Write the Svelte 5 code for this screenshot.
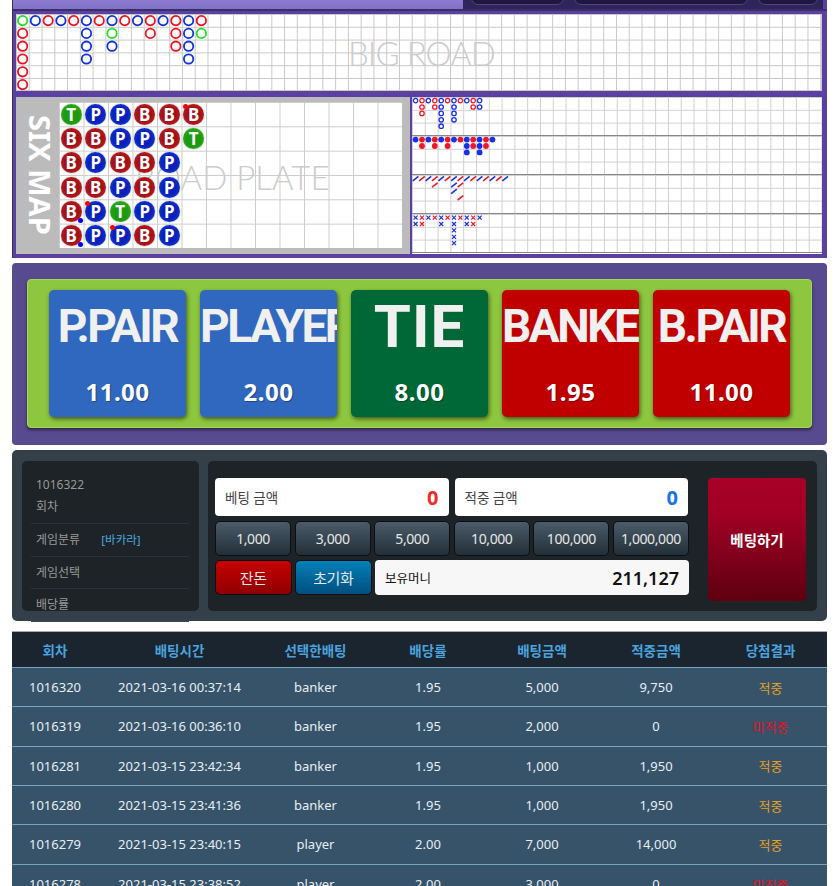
<script>
  // 빅로드: 컬럼별 결과 (R 뱅커, B 플레이어, G 타이)
  const bigRoad = ['GRRRRR', 'B', 'R', 'B', 'R', 'BBBB', 'R', 'BGB', 'R', 'B', 'RR', 'B', 'RRR', 'BBBB', 'RG'];
  const bigColor = { R: '#f01020', B: '#1030e0', G: '#20e020' };

  const plate = [
    ['T', 'P', 'P', 'B', 'B', 'B'],
    ['B', 'B', 'P', 'P', 'B', 'T'],
    ['B', 'P', 'B', 'B', 'P'],
    ['B', 'B', 'P', 'B', 'P'],
    ['B', 'P', 'T', 'P', 'P'],
    ['B', 'P', 'P', 'B', 'P']
  ];
  const redDots = ['0-5', '4-1', '5-2'];
  const blueDots = ['4-0', '5-0'];

  const derived = [
    { kind: 'ring', cols: ['B', 'RRR', 'B', 'RR', 'BBBBB', 'R', 'BBBB', 'R', 'B', 'RR', 'BB'] },
    { kind: 'dot', cols: ['B', 'RR', 'B', 'RR', 'B', 'RR', 'B', 'R', 'BBB', 'RR', 'BBB', 'RR', 'B'] },
    { kind: 'slash', cols: ['B', 'R', 'B', 'RR', 'B', 'R', 'BBB', 'RR-R', 'B', 'R', 'B', 'R', 'B', 'R', 'B'] },
    { kind: 'cross', cols: ['BB', 'RR', 'B', 'R', 'BB', 'R', 'BBBBB', 'R', 'BB', 'RR', 'B'] }
  ];
  const smallColor = { R: '#f01828', B: '#1830e8' };

  const chips = ['1,000', '3,000', '5,000', '10,000', '100,000', '1,000,000'];
  const cards = [
    { name: 'P.PAIR', odds: '11.00', cls: 'blue' },
    { name: 'PLAYER', odds: '2.00', cls: 'blue' },
    { name: 'TIE', odds: '8.00', cls: 'green' },
    { name: 'BANKER', odds: '1.95', cls: 'red' },
    { name: 'B.PAIR', odds: '11.00', cls: 'red' }
  ];
  const heads = ['회차', '배팅시간', '선택한배팅', '배당률', '배팅금액', '적중금액', '당첨결과'];
  const rows = [
    ['1016320', '2021-03-16 00:37:14', 'banker', '1.95', '5,000', '9,750', '적중'],
    ['1016319', '2021-03-16 00:36:10', 'banker', '1.95', '2,000', '0', '미적중'],
    ['1016281', '2021-03-15 23:42:34', 'banker', '1.95', '1,000', '1,950', '적중'],
    ['1016280', '2021-03-15 23:41:36', 'banker', '1.95', '1,000', '1,950', '적중'],
    ['1016279', '2021-03-15 23:40:15', 'player', '2.00', '7,000', '14,000', '적중'],
    ['1016278', '2021-03-15 23:38:52', 'player', '2.00', '3,000', '0', '미적중']
  ];
</script>

<div class="page">
  <section class="roads">
    <div class="topbar">
      <div class="topbar-left"></div>
      <div class="topbar-right">
        <span class="pill" style="width:93px"></span>
        <span class="pill" style="width:174px"></span>
        <span class="pill" style="width:60px"></span>
      </div>
    </div>

    <div class="bigroad">
      <span class="mark mark-big">BIG ROAD</span>
      <svg width="805" height="77" class="layer">
        {#each bigRoad as col, c}
          {#each col.split('') as v, r}
            <circle cx={6.6 + c * 12.77} cy={6.6 + r * 12.8} r="4.7" fill="none" stroke={bigColor[v]} stroke-width="1.8" />
          {/each}
        {/each}
      </svg>
    </div>

    <div class="lower">
      <div class="sixmap">
        <div class="sixmap-title">SIX MAP</div>
        <div class="plate">
          <span class="mark mark-plate">ROAD PLATE</span>
          {#each plate as line, r}
            <div class="plate-row">
              {#each line as v, c}
                <div class="ball ball-{v}">
                  {v}
                  {#if redDots.includes(`${r}-${c}`)}<i class="pair pair-red"></i>{/if}
                  {#if blueDots.includes(`${r}-${c}`)}<i class="pair pair-blue"></i>{/if}
                </div>
              {/each}
            </div>
          {/each}
        </div>
      </div>

      <div class="boards">
        {#each derived as board}
          <div class="board">
            <svg width="410" height="38" class="layer">
              {#each board.cols as col, c}
                {#each col.split('') as v, r}
                  {#if v !== '-'}
                    {@const x = 3.6 + c * 6.4}
                    {@const y = 3.6 + r * 6.4}
                    {#if board.kind === 'ring'}
                      <circle cx={x} cy={y} r="2.2" fill="none" stroke={smallColor[v]} stroke-width="1.3" />
                    {:else if board.kind === 'dot'}
                      <circle cx={x} cy={y} r="2.9" fill={smallColor[v]} />
                    {:else if board.kind === 'slash'}
                      <line x1={x - 2.8} y1={y + 2.2} x2={x + 2.8} y2={y - 2.2} stroke={smallColor[v]} stroke-width="1.6" />
                    {:else}
                      <path d="M{x - 2} {y - 2}L{x + 2} {y + 2}M{x + 2} {y - 2}L{x - 2} {y + 2}" stroke={smallColor[v]} stroke-width="1.2" fill="none" />
                    {/if}
                  {/if}
                {/each}
              {/each}
            </svg>
          </div>
        {/each}
      </div>
    </div>
  </section>

  <section class="bet">
    <div class="bet-inner">
      {#each cards as card}
        <div class="card {card.cls}">
          <div class="card-name" class:tie={card.name === 'TIE'}>{card.name}</div>
          <div class="card-odds">{card.odds}</div>
        </div>
      {/each}
    </div>
  </section>

  <section class="control">
    <div class="info">
      <div class="info-row first">
        <div>1016322</div>
        <div class="round-label">회차</div>
      </div>
      <div class="info-row">게임분류 <span class="tag">[바카라]</span></div>
      <div class="info-row">게임선택</div>
      <div class="info-row">배당률</div>
    </div>

    <div class="slip">
      <div class="slip-main">
        <div class="amounts">
          <div class="amount">
            <span>베팅 금액</span><b class="val-red">0</b>
          </div>
          <div class="amount">
            <span>적중 금액</span><b class="val-blue">0</b>
          </div>
        </div>
        <div class="chips">
          {#each chips as chip}
            <button class="chip">{chip}</button>
          {/each}
        </div>
        <div class="actions">
          <button class="chip act-red">잔돈</button>
          <button class="chip act-blue">초기화</button>
          <div class="balance">
            <span>보유머니</span><b>211,127</b>
          </div>
        </div>
      </div>
      <button class="submit">베팅하기</button>
    </div>
  </section>

  <table class="history">
    <colgroup>
      <col style="width:86px" /><col style="width:163px" /><col style="width:109px" />
      <col style="width:116px" /><col style="width:112px" /><col style="width:116px" /><col />
    </colgroup>
    <thead>
      <tr>
        {#each heads as head}<th>{head}</th>{/each}
      </tr>
    </thead>
    <tbody>
      {#each rows as row}
        <tr>
          {#each row as cell, i}
            <td class:hit={i === 6 && cell === '적중'} class:miss={i === 6 && cell === '미적중'}>{cell}</td>
          {/each}
        </tr>
      {/each}
    </tbody>
  </table>
</div>

<style>
  :global(html), :global(body) {
    margin: 0;
    overflow: hidden;
    background: #fff;
  }

  .page {
    width: 815px;
    margin-left: 12px;
    font-family: "Noto Sans", "Noto Sans CJK KR", sans-serif;
  }

  .layer { position: absolute; left: 0; top: 0; }

  /* 상단 로드맵 */
  .roads {
    height: 258px;
    box-sizing: border-box;
    background: #5b3fa3;
    border-left: 1px solid #3a3068;
    padding: 0 5px 0 3px;
    overflow: hidden;
  }
  .topbar {
    display: flex;
    height: 9px;
    margin: 0 -5px 0 -3px;
    border-bottom: 2px solid #3b2f68;
  }
  .topbar-left {
    width: 450px;
    background: linear-gradient(#8d7bd2, #8072c6);
  }
  .topbar-right {
    flex: 1;
    display: flex;
    gap: 10px;
    padding-left: 8px;
    background: #2f2558;
    align-items: flex-end;
    height: 9px;
    border-right: 4px solid #5b3fa3;
  }
  .pill {
    display: block;
    height: 14px;
    margin-bottom: 4px;
    box-sizing: border-box;
    background: #20163f;
    border: 1px solid #4d4488;
    border-radius: 7px;
  }
  .bigroad {
    position: relative;
    height: 77px;
    margin-top: 3px;
    background-color: #fff;
    background-image:
      linear-gradient(90deg, #c9c9c9 1px, transparent 1px),
      linear-gradient(#c9c9c9 1px, transparent 1px);
    background-size: 12.77px 12.8px;
    box-shadow: inset -1px -1px 0 #c9c9c9;
  }
  .mark {
    position: absolute;
    font-family: Lato, sans-serif;
    font-weight: 300;
    color: #ccc;
    white-space: nowrap;
    line-height: 1;
  }
  .mark-big { left: 332px; top: 23px; font-size: 33px; letter-spacing: -1px; }
  .mark-plate { left: 76px; top: 59px; font-size: 33px; }

  .lower {
    display: flex;
    height: 157px;
    margin-top: 6px;
    gap: 2px;
  }
  .sixmap {
    width: 394px;
    background: #bbb;
    display: flex;
    box-sizing: border-box;
    padding: 5px 8px 6px 0;
  }
  .sixmap-title {
    width: 43px;
    writing-mode: vertical-rl;
    text-align: center;
    line-height: 37px;
    color: #fff;
    font: 700 29px/37px "Noto Sans", sans-serif;
    letter-spacing: 0;
  }
  .plate {
    position: relative;
    width: 343px;
    height: 146px;
    background-color: #fff;
    background-image:
      linear-gradient(90deg, #ccc 1px, transparent 1px),
      linear-gradient(#ccc 1px, transparent 1px);
    background-size: 24.5px 24.33px;
  }
  .plate-row {
    position: relative;
    display: flex;
    height: 24.33px;
    align-items: center;
  }
  .ball {
    position: relative;
    flex: 0 0 21px;
    height: 21px;
    margin: 0 1.75px;
    border-radius: 50%;
    color: #fff;
    font: 700 17px/21px "Noto Sans", sans-serif;
    text-align: center;
    box-shadow: 0 0 1.5px rgba(80, 80, 80, 0.6);
  }
  .ball-B { background: radial-gradient(circle at 50% 50%, #9e1218 45%, #c81c22 85%, #d84a4a 100%); }
  .ball-P { background: radial-gradient(circle at 50% 50%, #0a20b8 45%, #1038d8 80%, #2a70e8 100%); }
  .ball-T { background: radial-gradient(circle at 50% 55%, #1c9a10 45%, #30b018 80%, #58c838 100%); }
  .pair {
    position: absolute;
    width: 5px;
    height: 5px;
    border-radius: 50%;
  }
  .pair-red { background: #f00; left: 0; top: 0; }
  .pair-blue { background: #00f; right: -1px; bottom: -1px; }

  .boards {
    flex: 1;
    display: flex;
    flex-direction: column;
    background: #fff;
  }
  .board {
    position: relative;
    height: 38px;
    border-bottom: 1.3px solid #888;
    background-image:
      linear-gradient(90deg, #d0d0d0 1px, transparent 1px),
      linear-gradient(#d0d0d0 1px, transparent 1px);
    background-size: 12.8px 12.8px;
  }

  /* 배팅 카드 */
  .bet {
    height: 182px;
    box-sizing: border-box;
    margin-top: 5px;
    padding: 16px 15px;
    background: #584a8e;
    border-radius: 4px;
  }
  .bet-inner {
    height: 149px;
    box-sizing: border-box;
    display: flex;
    gap: 14px;
    padding: 10px 21px;
    background: #8dc63f;
    border: 1px solid #a4d85a;
    border-radius: 4px;
    box-shadow: 0 2px 3px rgba(0, 0, 0, 0.5);
  }
  .card {
    flex: 1;
    height: 127px;
    border-radius: 5px;
    text-align: center;
    color: #f0f0f0;
    box-shadow: 1px 2px 4px rgba(0, 0, 0, 0.55);
    overflow: hidden;
  }
  .blue { background: #3068c0; }
  .green { background: #006837; }
  .red { background: #c00000; }
  .card-name {
    height: 73px;
    font: 700 46px/73px Roboto, sans-serif;
    letter-spacing: -2.5px;
    white-space: nowrap;
  }
  .card-name.tie { font-size: 60px; letter-spacing: 1px; }
  .card-odds {
    margin-top: 13px;
    font: 700 24px/32px "Noto Sans", sans-serif;
    color: #fff;
    letter-spacing: 0.5px;
    text-shadow: 1px 1px 1px rgba(0, 0, 0, 0.35);
  }

  /* 배팅 입력 */
  .control {
    position: relative;
    height: 171px;
    box-sizing: border-box;
    margin-top: 5px;
    padding: 11px 10px;
    display: flex;
    gap: 9px;
    background: #333f49;
    border-radius: 5px;
  }
  .info {
    width: 177px;
    height: 150px;
    box-sizing: border-box;
    padding: 13px 10px 0 9px;
    background: #1d2327;
    border-radius: 5px;
    color: #999;
    font-size: 12px;
  }
  .info-row {
    height: 32.5px;
    box-sizing: border-box;
    padding: 0 5px;
    line-height: 32px;
    border-bottom: 1px solid #2c343a;
  }
  .info-row.first {
    height: 50px;
    line-height: 22px;
  }
  .round-label { margin-top: 0; }
  .info-row:last-child { border-bottom: 1px solid #3d4851; }
  .tag { margin-left: 18px; color: #4aa8e0; font-size: 11.5px; }

  .slip {
    flex: 1;
    height: 150px;
    box-sizing: border-box;
    padding: 17px 11px 0 7px;
    display: flex;
    justify-content: space-between;
    background: #1d2327;
    border-radius: 5px;
  }
  .slip-main { width: 474px; }
  .amounts { display: flex; gap: 6px; width: 473px; }
  .amount {
    flex: 1;
    height: 38px;
    box-sizing: border-box;
    padding: 0 10px;
    display: flex;
    justify-content: space-between;
    align-items: center;
    background: #fff;
    border-radius: 4px;
    color: #444;
    font-size: 13.5px;
  }
  .amount b { font-size: 20px; }
  .val-red { color: #ee2b24; }
  .val-blue { color: #1a73e8; }
  .chips, .actions {
    display: flex;
    gap: 3.5px;
    margin-top: 5px;
  }
  .actions { margin-top: 4px; }
  .chip {
    width: 76.5px;
    height: 35px;
    padding: 0;
    box-sizing: border-box;
    background: linear-gradient(#4b5b69, #232f38);
    border: 1px solid #0c0f12;
    border-radius: 5px;
    color: #e6e6e6;
    font: 14px "Noto Sans", sans-serif;
    letter-spacing: -0.4px;
  }
  .act-red {
    background: linear-gradient(#c80000, #8e0000);
    font: 15px "Noto Sans CJK KR", sans-serif;
  }
  .act-blue {
    background: linear-gradient(#0080b8, #004f7e);
    font: 15px "Noto Sans CJK KR", sans-serif;
  }
  .balance {
    flex: 1;
    box-sizing: border-box;
    height: 35px;
    padding: 0 10px;
    display: flex;
    justify-content: space-between;
    align-items: center;
    background: #f7f7f7;
    border-radius: 4px;
    color: #111;
    font-size: 12.5px;
  }
  .balance b { font-size: 18px; font-weight: 600; }
  .submit {
    width: 98px;
    height: 123px;
    background: linear-gradient(#a80028, #a00024 30%, #5e0010);
    border: none;
    border-radius: 4px;
    color: #fff;
    font: 700 14.5px "Noto Sans CJK KR", sans-serif;
  }

  /* 배팅 내역 */
  .history {
    width: 815px;
    margin-top: 10px;
    border-collapse: collapse;
    table-layout: fixed;
    border-top: 1px solid #aaa;
    font-size: 13px;
  }
  th {
    height: 35px;
    padding: 0;
    background: #1a252f;
    color: #4aa3df;
    font-size: 13.5px;
    font-weight: 700;
  }
  td {
    height: 39.33px;
    box-sizing: border-box;
    padding: 0;
    text-align: center;
    background: #36536a;
    color: #e8eef2;
    border-top: 1px solid #74a5ba;
  }
  td.hit { color: #e8a020; }
  td.miss { color: #e8101c; }
</style>
